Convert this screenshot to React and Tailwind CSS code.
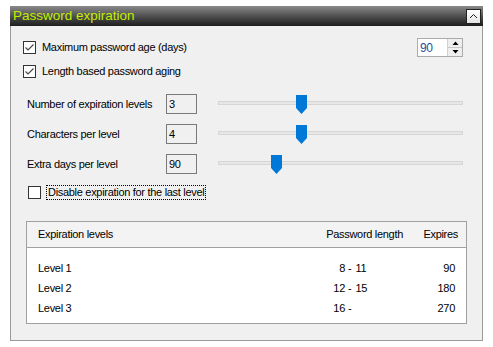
import React from "react";

const font = { fontFamily: '"Liberation Sans", Arial, sans-serif' };

function Check({ checked }) {
  return (
    <div className="w-[13px] h-[13px] border border-[#333333] bg-white flex items-center justify-center shrink-0">
      {checked && (
        <svg width="11" height="11" viewBox="0 0 11 11">
          <path d="M1.5 5.5 L4 8 L9.5 2.5" fill="none" stroke="#444444" strokeWidth="1.1" />
        </svg>
      )}
    </div>
  );
}

function Slider({ pos }) {
  return (
    <div className="relative w-[245px] h-[20px]">
      <div className="absolute left-0 right-0 top-[7px] h-[4px] bg-[#e7e7e7] border border-[#d6d6d6]" />
      <svg className="absolute top-[1px]" style={{ left: pos }} width="11" height="19" viewBox="0 0 11 19">
        <path d="M0 0 H11 V13 L5.5 19 L0 13 Z" fill="#0078d7" />
      </svg>
    </div>
  );
}

function SliderRow({ label, value, pos, mt }) {
  return (
    <div className={`flex items-center h-[20px] pl-[16px] ${mt}`}>
      <div className="w-[139px]">{label}</div>
      <div className="w-[31px] h-[20px] border border-[#7a7a7a] bg-[#f0f0f0] pl-[2px] flex items-center">{value}</div>
      <div className="ml-[21px]">
        <Slider pos={pos} />
      </div>
    </div>
  );
}

export default function App() {
  return (
    <div className="w-[493px] h-[347px] bg-white pt-[6px] pl-[10px] text-[11px] tracking-[-0.3px] text-black" style={font}>
      <div className="w-[473px] h-[335px] flex flex-col">
        <div className="h-[20px] bg-gradient-to-b from-[#8a8a8a] to-[#1e1e1e] flex items-center justify-between pl-[3px] pr-[2px]">
          <span className="text-[13.5px] tracking-[0px] text-[#c2ee00] leading-none">Password expiration</span>
          <div className="w-[15px] h-[15px] border border-[#222] bg-gradient-to-b from-white to-[#e4e4e4] flex items-center justify-center">
            <svg width="9" height="6" viewBox="0 0 9 6">
              <path d="M1 5 L4.5 1.5 L8 5" fill="none" stroke="#222" strokeWidth="1" />
            </svg>
          </div>
        </div>
        <div className="flex-1 bg-[#f0f0f0] border-l border-r border-b border-[#9a9a9a] flex flex-col">
          <div className="flex items-center h-[19px] mt-[12px] pl-[12px] pr-[19px]">
            <Check checked />
            <span className="ml-[6px] flex-1">Maximum password age (days)</span>
            <div className="w-[46px] h-[19px] border border-[#ababab] bg-white flex">
              <div className="flex-1 flex items-center pl-[2px] text-[12px] text-[#1d4fa0]">90</div>
              <div className="w-[15px] flex flex-col border-l border-[#d0d0d0]">
                <div className="flex-1 bg-[#eeeeee] border-b border-[#c8c8c8] flex items-center justify-center">
                  <svg width="7" height="4" viewBox="0 0 7 4"><path d="M0.5 4 L3.5 0.5 L6.5 4 Z" fill="#000" /></svg>
                </div>
                <div className="flex-1 bg-[#eeeeee] flex items-center justify-center">
                  <svg width="7" height="4" viewBox="0 0 7 4"><path d="M0.5 0 L3.5 3.5 L6.5 0 Z" fill="#000" /></svg>
                </div>
              </div>
            </div>
          </div>
          <div className="flex items-center h-[13px] mt-[8px] pl-[12px]">
            <Check checked />
            <span className="ml-[6px]">Length based password aging</span>
          </div>
          <SliderRow label="Number of expiration levels" value="3" pos={78} mt="mt-[16px]" />
          <SliderRow label="Characters per level" value="4" pos={78} mt="mt-[10px]" />
          <SliderRow label="Extra days per level" value="90" pos={53} mt="mt-[10px]" />
          <div className="flex items-center h-[15px] mt-[11px] pl-[17px]">
            <Check />
            <span className="ml-[5px] h-[15px] px-[1px] flex items-center border border-dotted border-black">Disable expiration for the last level</span>
          </div>
          <div className="ml-[15px] mt-[21px] w-[441px] h-[103px] border border-[#a0a0a0] bg-white flex flex-col">
            <div className="h-[26px] border-b border-[#a0a0a0] bg-[#f3f3f3] flex items-center">
              <div className="flex-1 pl-[11px]">Expiration levels</div>
              <div className="w-[90px] text-right pr-[7px]">Password length</div>
              <div className="w-[56px] text-right pr-[8px]">Expires</div>
            </div>
            <div className="pt-[10px] flex flex-col">
              {[
                ["Level 1", "8", "11", "90"],
                ["Level 2", "12", "15", "180"],
                ["Level 3", "16", "", "270"],
              ].map(([name, a, b, e]) => (
                <div key={name} className="h-[20px] flex items-center">
                  <div className="flex-1 pl-[11px]">{name}</div>
                  <div className="w-[90px] pl-[13px] flex">
                    <span className="w-[12px] text-right">{a}</span>
                    <span className="ml-[3px]">-</span>
                    {b && <span className="ml-[4px]">{b}</span>}
                  </div>
                  <div className="w-[56px] text-right pr-[11px]">{e}</div>
                </div>
              ))}
            </div>
          </div>
        </div>
      </div>
    </div>
  );
}
